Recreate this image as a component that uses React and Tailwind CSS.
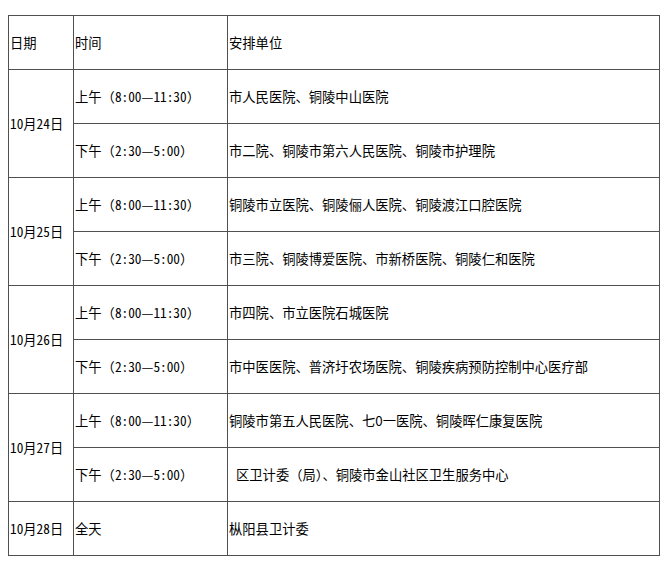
import React from 'react';

const days = [
  {
    date: '10月24日',
    slots: [
      { time: '上午（8:00—11:30）', units: '市人民医院、铜陵中山医院' },
      { time: '下午（2:30—5:00）', units: '市二院、铜陵市第六人民医院、铜陵市护理院' },
    ],
  },
  {
    date: '10月25日',
    slots: [
      { time: '上午（8:00—11:30）', units: '铜陵市立医院、铜陵俪人医院、铜陵渡江口腔医院' },
      { time: '下午（2:30—5:00）', units: '市三院、铜陵博爱医院、市新桥医院、铜陵仁和医院' },
    ],
  },
  {
    date: '10月26日',
    slots: [
      { time: '上午（8:00—11:30）', units: '市四院、市立医院石城医院' },
      { time: '下午（2:30—5:00）', units: '市中医医院、普济圩农场医院、铜陵疾病预防控制中心医疗部' },
    ],
  },
  {
    date: '10月27日',
    slots: [
      { time: '上午（8:00—11:30）', units: '铜陵市第五人民医院、七0一医院、铜陵晖仁康复医院' },
      { time: '下午（2:30—5:00）', units: '区卫计委（局）、铜陵市金山社区卫生服务中心', indent: true },
    ],
  },
];

// digits in the original font are exactly half an em wide
function Txt({ children }) {
  return children.split(/([0-9:]+)/).map((part, i) =>
    /^[0-9:]+$/.test(part) ? (
      <span key={i} className="[font-feature-settings:'hwid']">{part}</span>
    ) : (
      part
    )
  );
}

const cell = 'bg-white flex items-center pl-[1px] whitespace-nowrap';

export default function App() {
  return (
    <div
      className="min-h-[565px] bg-white pt-[15px] pl-[8px] text-black text-[13.3px] leading-none"
      style={{ fontFamily: '"Noto Sans CJK SC", "Noto Sans", sans-serif' }}
    >
      <div className="grid w-[652px] grid-cols-[64px_153px_431px] auto-rows-[53px] gap-px bg-[#505050] p-px">
        {/* header */}
        <div className={cell}>日期</div>
        <div className={cell}>时间</div>
        <div className={cell}>安排单位</div>

        {days.map((d) => (
          <React.Fragment key={d.date}>
            <div className={`${cell} row-span-2`}><Txt>{d.date}</Txt></div>
            {d.slots.map((s, i) => (
              <React.Fragment key={i}>
                <div className={cell}><Txt>{s.time}</Txt></div>
                <div className={`${cell} ${s.indent ? 'pl-[8px]' : ''}`}>{s.units}</div>
              </React.Fragment>
            ))}
          </React.Fragment>
        ))}

        <div className={cell}><Txt>10月28日</Txt></div>
        <div className={cell}>全天</div>
        <div className={cell}>枞阳县卫计委</div>
      </div>
    </div>
  );
}
